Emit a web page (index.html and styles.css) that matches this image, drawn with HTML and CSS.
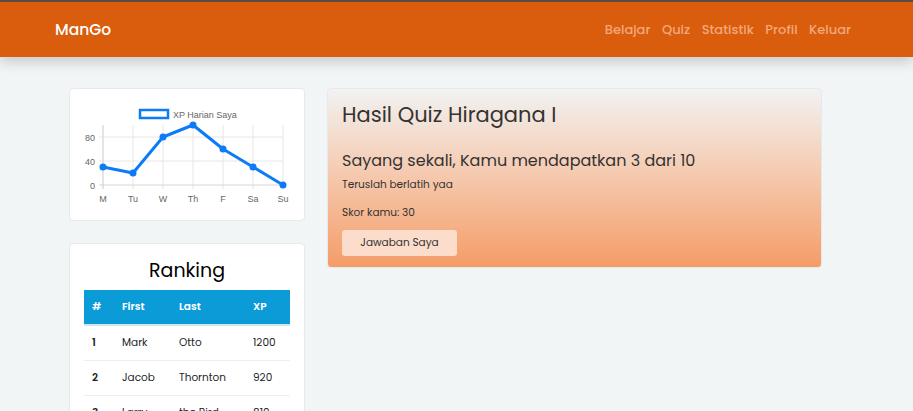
FILE: index.html
```html
<!DOCTYPE html>
<html>
<head>
<meta charset="utf-8">
<link rel="stylesheet" href="styles.css">
</head>
<body>
<nav class="navbar">
  <div class="brand">ManGo</div>
  <ul class="nav-links">
    <li>Belajar</li>
    <li>Quiz</li>
    <li>Statistik</li>
    <li>Profil</li>
    <li>Keluar</li>
  </ul>
</nav>
<main class="content">
  <aside class="side">
    <section class="card chart-card">
      <svg class="chart" width="236" height="131" viewBox="0 0 236 131">
        <rect x="71" y="21" width="28" height="8" fill="#fff" stroke="#0d7bf7" stroke-width="2.5"/>
        <text x="104" y="28.5" class="legend">XP Harian Saya</text>
        <g stroke="#e6e6e6" stroke-width="1">
          <line x1="34" y1="36" x2="34" y2="100"/>
          <line x1="64" y1="36" x2="64" y2="100"/>
          <line x1="94" y1="36" x2="94" y2="100"/>
          <line x1="124" y1="36" x2="124" y2="100"/>
          <line x1="154" y1="36" x2="154" y2="100"/>
          <line x1="184" y1="36" x2="184" y2="100"/>
          <line x1="214" y1="36" x2="214" y2="100"/>
          <line x1="30" y1="48" x2="214" y2="48"/>
          <line x1="30" y1="72" x2="214" y2="72"/>
        </g>
        <line x1="30" y1="96" x2="214" y2="96" stroke="#d6d6d6"/>
        <line x1="34" y1="36" x2="34" y2="100" stroke="#d6d6d6"/>
        <g class="tick">
          <text x="26" y="52" text-anchor="end">80</text>
          <text x="26" y="76" text-anchor="end">40</text>
          <text x="26" y="100" text-anchor="end">0</text>
          <text x="34" y="113" text-anchor="middle">M</text>
          <text x="64" y="113" text-anchor="middle">Tu</text>
          <text x="94" y="113" text-anchor="middle">W</text>
          <text x="124" y="113" text-anchor="middle">Th</text>
          <text x="154" y="113" text-anchor="middle">F</text>
          <text x="184" y="113" text-anchor="middle">Sa</text>
          <text x="214" y="113" text-anchor="middle">Su</text>
        </g>
        <polyline points="34,78 64,84 94,48 124,36 154,60 184,78 214,96" fill="none" stroke="#0d7bf7" stroke-width="3" stroke-linejoin="round"/>
        <g fill="#0d7bf7">
          <circle cx="34" cy="78" r="3.5"/>
          <circle cx="64" cy="84" r="3.5"/>
          <circle cx="94" cy="48" r="3.5"/>
          <circle cx="124" cy="36" r="3.5"/>
          <circle cx="154" cy="60" r="3.5"/>
          <circle cx="184" cy="78" r="3.5"/>
          <circle cx="214" cy="96" r="3.5"/>
        </g>
      </svg>
    </section>
    <section class="card rank-card">
      <h2 class="rank-title">Ranking</h2>
      <table class="rank-table">
        <thead>
          <tr><th class="c-num">#</th><th class="c-first">First</th><th class="c-last">Last</th><th>XP</th></tr>
        </thead>
        <tbody>
          <tr><td class="num">1</td><td>Mark</td><td>Otto</td><td>1200</td></tr>
          <tr><td class="num">2</td><td>Jacob</td><td>Thornton</td><td>920</td></tr>
          <tr><td class="num">3</td><td>Larry</td><td>the Bird</td><td>810</td></tr>
        </tbody>
      </table>
    </section>
  </aside>
  <section class="card result-card">
    <h1 class="result-title">Hasil Quiz Hiragana I</h1>
    <h3 class="result-sub">Sayang sekali, Kamu mendapatkan 3 dari 10</h3>
    <p class="result-text">Teruslah berlatih yaa</p>
    <p class="result-score">Skor kamu: 30</p>
    <button class="btn">Jawaban Saya</button>
  </section>
</main>
</body>
</html>
```

FILE: styles.css
```css
* { box-sizing: border-box; }
html, body { margin: 0; padding: 0; }
body {
  background: #f2f5f6;
  font-family: "Poppins", "Inter", "Noto Sans", sans-serif;
  color: #333;
  height: 411px;
  overflow: hidden;
}
.navbar {
  height: 57px;
  background: #d95d0c;
  border-top: 2px solid #5b4a40;
  display: flex;
  align-items: center;
  justify-content: space-between;
  padding: 0 62px 0 55px;
  box-shadow: 0 5px 12px rgba(0, 0, 0, 0.18);
  position: relative;
}
.brand {
  color: #fff;
  font-size: 15.5px;
  font-weight: 500;
}
.nav-links {
  list-style: none;
  margin: 0;
  padding: 0;
  display: flex;
  gap: 11.5px;
  color: #f2a77c;
  font-size: 13px;
  font-weight: 500;
}
.content {
  display: flex;
  align-items: flex-start;
  gap: 22px;
  padding: 31px 0 0 69px;
}
.side {
  width: 236px;
  display: flex;
  flex-direction: column;
  gap: 22px;
}
.card {
  background: #fff;
  border: 1px solid #e5e9eb;
  border-radius: 4px;
}
.chart-card { height: 133px; overflow: hidden; }
.chart { display: block; margin: 0 0 0 -1px; }
.legend { font-family: "Liberation Sans", Arial, sans-serif; font-size: 9px; fill: #666; }
.tick text { font-family: "Liberation Sans", Arial, sans-serif; font-size: 9px; fill: #666; }
.rank-card {
  padding: 13px 14px 0 14px;
  height: 200px;
}
.rank-title {
  margin: 0 0 5px 0;
  text-align: center;
  font-size: 19px;
  font-weight: 400;
  color: #000;
  line-height: 28px;
}
.rank-table {
  width: 100%;
  border-collapse: collapse;
  font-size: 10.5px;
}
.rank-table th {
  background: #0b9bd7;
  color: #fff;
  font-weight: 600;
  text-align: left;
  height: 35px;
  padding: 0 8px;
  border-bottom: 2px solid #cfe6f0;
}
.rank-table td {
  height: 35px;
  padding: 0 8px;
  color: #212529;
  border-bottom: 1px solid #eceeef;
}
.rank-table td.num { font-weight: 600; }
.c-num { width: 30px; }
.c-first { width: 57px; }
.c-last { width: 74px; }
.result-card {
  width: 495px;
  height: 180px;
  padding: 11px 14px 0 14px;
  background: linear-gradient(to bottom, #f2f2f2 0%, #f5c8ac 50%, #f59c68 100%);
}
.result-title {
  margin: 0;
  font-size: 21px;
  font-weight: 400;
  color: #333;
  line-height: 30px;
}
.result-sub {
  margin: 20px 0 0 0;
  font-size: 16px;
  font-weight: 400;
  color: #333;
  line-height: 22px;
}
.result-text {
  margin: 5px 0 0 0;
  font-size: 10.5px;
  font-weight: 400;
  line-height: 16px;
  color: #333;
}
.result-score {
  margin: 12px 0 0 0;
  font-size: 10.5px;
  font-weight: 400;
  line-height: 16px;
  color: #333;
}
.btn {
  margin-top: 9px;
  width: 115px;
  height: 26px;
  background: #fcdcca;
  border: none;
  border-radius: 3px;
  font-family: inherit;
  font-size: 10.5px;
  color: #333;
}
```
